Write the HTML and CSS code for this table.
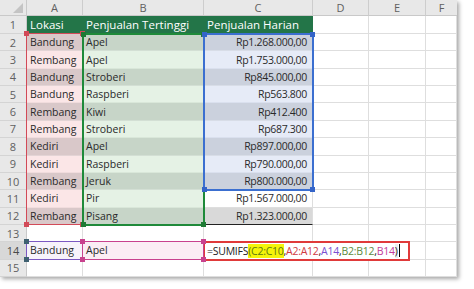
FILE: index.html
```html
<!DOCTYPE html>
<html>
<head>
<meta charset="utf-8">
<link rel="stylesheet" href="styles.css">
</head>
<body>
<div class="sheet">
  <div class="grid">
    <div class="corner"><span class="tri"></span></div>
    <div class="ch">A</div><div class="ch">B</div><div class="ch">C</div><div class="ch">D</div><div class="ch">E</div><div class="ch last">F</div>

    <div class="rh">1</div><div class="c hd">Lokasi</div><div class="c hd">Penjualan Tertinggi</div><div class="c hd">Penjualan Harian</div><div class="c"></div><div class="c"></div><div class="c"></div>

    <div class="rh">2</div><div class="c a2">Bandung</div><div class="c b2">Apel</div><div class="c n c2">Rp1.268.000,00</div><div class="c"></div><div class="c"></div><div class="c"></div>
    <div class="rh">3</div><div class="c a1">Rembang</div><div class="c b1">Apel</div><div class="c n c1">Rp1.753.000,00</div><div class="c"></div><div class="c"></div><div class="c"></div>
    <div class="rh">4</div><div class="c a2">Bandung</div><div class="c b2">Stroberi</div><div class="c n c2">Rp845.000,00</div><div class="c"></div><div class="c"></div><div class="c"></div>
    <div class="rh">5</div><div class="c a1">Bandung</div><div class="c b1">Raspberi</div><div class="c n c1">Rp563.800</div><div class="c"></div><div class="c"></div><div class="c"></div>
    <div class="rh">6</div><div class="c a2">Rembang</div><div class="c b2">Kiwi</div><div class="c n c2">Rp412.400</div><div class="c"></div><div class="c"></div><div class="c"></div>
    <div class="rh">7</div><div class="c a1">Rembang</div><div class="c b1">Stroberi</div><div class="c n c1">Rp687.300</div><div class="c"></div><div class="c"></div><div class="c"></div>
    <div class="rh">8</div><div class="c a2">Kediri</div><div class="c b2">Apel</div><div class="c n c2">Rp897.000,00</div><div class="c"></div><div class="c"></div><div class="c"></div>
    <div class="rh">9</div><div class="c a1">Kediri</div><div class="c b1">Raspberi</div><div class="c n c1">Rp790.000,00</div><div class="c"></div><div class="c"></div><div class="c"></div>
    <div class="rh">10</div><div class="c a2">Rembang</div><div class="c b2">Jeruk</div><div class="c n c2">Rp800.000,00</div><div class="c"></div><div class="c"></div><div class="c"></div>
    <div class="rh">11</div><div class="c a1">Kediri</div><div class="c b1">Pir</div><div class="c n">Rp1.567.000,00</div><div class="c"></div><div class="c"></div><div class="c"></div>
    <div class="rh">12</div><div class="c a2">Rembang</div><div class="c b2">Pisang</div><div class="c n g12">Rp1.323.000,00</div><div class="c"></div><div class="c"></div><div class="c"></div>
    <div class="rh">13</div><div class="c"></div><div class="c"></div><div class="c"></div><div class="c"></div><div class="c"></div><div class="c"></div>
    <div class="rh act">14</div><div class="c a14">Bandung</div><div class="c b14">Apel</div><div class="c"></div><div class="c"></div><div class="c"></div><div class="c"></div>
    <div class="rh">15</div><div class="c"></div><div class="c"></div><div class="c"></div><div class="c"></div><div class="c"></div><div class="c"></div>
  </div>

  <div class="overlay">
    <div class="rng r-a"><i class="h tl"></i><i class="h tr"></i><i class="h bl"></i><i class="h br"></i></div>
    <div class="rng r-b"><i class="h tl"></i><i class="h tr"></i><i class="h bl"></i><i class="h br"></i></div>
    <div class="rng r-c"><i class="h tl"></i><i class="h tr"></i><i class="h bl"></i><i class="h br"></i></div>
    <div class="rng r-a14"><i class="h tl"></i><i class="h bl"></i></div>
    <div class="rng r-b14"><i class="h tl"></i><i class="h tr"></i><i class="h bl"></i><i class="h br"></i></div>
    <div class="edit"><span>=SUMIFS</span><span class="f-c">(C2:C10</span><span>,</span><span class="f-a">A2:A12</span><span>,</span><span class="f-a14">A14</span><span>,</span><span class="f-b">B2:B12</span><span>,</span><span class="f-b14">B14</span><span class="f-p">)</span><span class="caret"></span></div>
  </div>
</div>
</body>
</html>
```

FILE: styles.css
```css
html, body {
  margin: 0;
  padding: 0;
  background: #ffffff;
}

body {
  width: 474px;
  height: 289px;
  overflow: hidden;
  font-family: "Open Sans", "Noto Sans", sans-serif;
}

.sheet {
  position: relative;
  width: 457px;
  height: 277px;
  box-shadow: 2px 2px 4px rgba(0, 0, 0, 0.35);
}

.grid,
.overlay {
  display: grid;
  grid-template-columns: 27px 56px 121px 109px 56px 57px 31px;
  grid-template-rows: 16px 18px repeat(14, 17.36px);
}

.overlay {
  position: absolute;
  inset: 0;
  pointer-events: none;
}

.corner {
  background: #e8e8e8;
  border-right: 1px solid #c9c9c9;
  border-bottom: 1px solid #c9c9c9;
  box-sizing: border-box;
  position: relative;
}

.tri {
  position: absolute;
  right: 3px;
  bottom: 2px;
  width: 0;
  height: 0;
  border-left: 10px solid transparent;
  border-bottom: 10px solid #c4c4c4;
}

.ch {
  background: #e8e8e8;
  color: #606060;
  font-size: 11px;
  line-height: 15px;
  text-align: center;
  border-right: 1px solid #cdcdcd;
  border-bottom: 1px solid #c9c9c9;
  box-sizing: border-box;
}

.ch.last {
  border-right: none;
}

.rh {
  background: #e8e8e8;
  color: #606060;
  font-size: 11px;
  display: flex;
  align-items: center;
  justify-content: center;
  border-right: 1px solid #c9c9c9;
  border-bottom: 1px solid #d4d4d4;
  box-sizing: border-box;
}

.rh.act {
  background: #d8d8d8;
  color: #4a4a4a;
}

.c {
  box-sizing: border-box;
  border-right: 1px solid #dedede;
  border-bottom: 1px solid #dedede;
  font-size: 10.5px;
  color: #2a2a2a;
  padding: 0 2px 0 3px;
  display: flex;
  align-items: center;
  white-space: nowrap;
  overflow: hidden;
}

.c.hd {
  background: #237548;
  color: #ffffff;
  font-size: 11.5px;
  border-color: #237548;
}

.c.n {
  justify-content: flex-end;
  padding-right: 5px;
  letter-spacing: -0.3px;
}

.a1 { background: #fbe6e7; border-color: #f1dcdd; }
.a2 { background: #d9c8c9; border-color: #e3d4d5; }
.b1 { background: #e5f2e5; border-color: #d9e7d9; }
.b2 { background: #c7d5c8; border-color: #d3dfd4; }
.c1 { background: #e6ebf7; border-color: #dae0ee; }
.c2 { background: #cbd1dd; border-color: #d8dde7; }
.g12 { background: #d9d9d9; border-bottom: 1px solid #222; }
.a14 { background: #f7f3fb; }
.b14 { background: #fbedf4; }

/* range highlights */
.rng {
  position: relative;
  margin: -1px 0 0 -1px;
  border: 1px solid;
}

.r-a { grid-column: 2 / 3; grid-row: 3 / 14; border-color: #d24a58; color: #d24a58; }
.r-b { grid-column: 3 / 4; grid-row: 3 / 14; border: 2px solid #1f8a3a; margin: -1px; color: #1f7a35; }
.r-c { grid-column: 4 / 5; grid-row: 3 / 12; border: 2px solid #3b6fd0; margin: -1px; color: #3464c8; }
.r-a14 { grid-column: 2 / 3; grid-row: 15 / 16; border-color: #7b58c2; color: #3f6070; }
.r-b14 { grid-column: 3 / 4; grid-row: 15 / 16; border-color: #c8428e; color: #c8428e; }

.h {
  position: absolute;
  width: 5px;
  height: 5px;
  background: currentColor;
}

.h.tl { left: -3px; top: -3px; }
.h.tr { right: -3px; top: -3px; }
.h.bl { left: -3px; bottom: -3px; }
.h.br { right: -3px; bottom: -3px; }

.edit {
  grid-column: 4 / 7;
  grid-row: 15 / 16;
  margin: -1px 16px -1px -1px;
  border: 2px solid #e03a3a;
  background: #ffffff;
  display: flex;
  align-items: center;
  padding-left: 2px;
  font-size: 10.5px;
  letter-spacing: -0.25px;
  color: #222;
  white-space: nowrap;
}

.f-c { background: #f4f40a; color: #5c7a12; }
.f-a { color: #d03a42; }
.f-a14 { color: #7a4fd0; }
.f-b { color: #5e8b3c; }
.f-b14 { color: #c23c98; }
.f-p { background: #eeeeee; }

.caret {
  display: inline-block;
  width: 1px;
  height: 13px;
  background: #000;
  margin-left: 1px;
}
```
